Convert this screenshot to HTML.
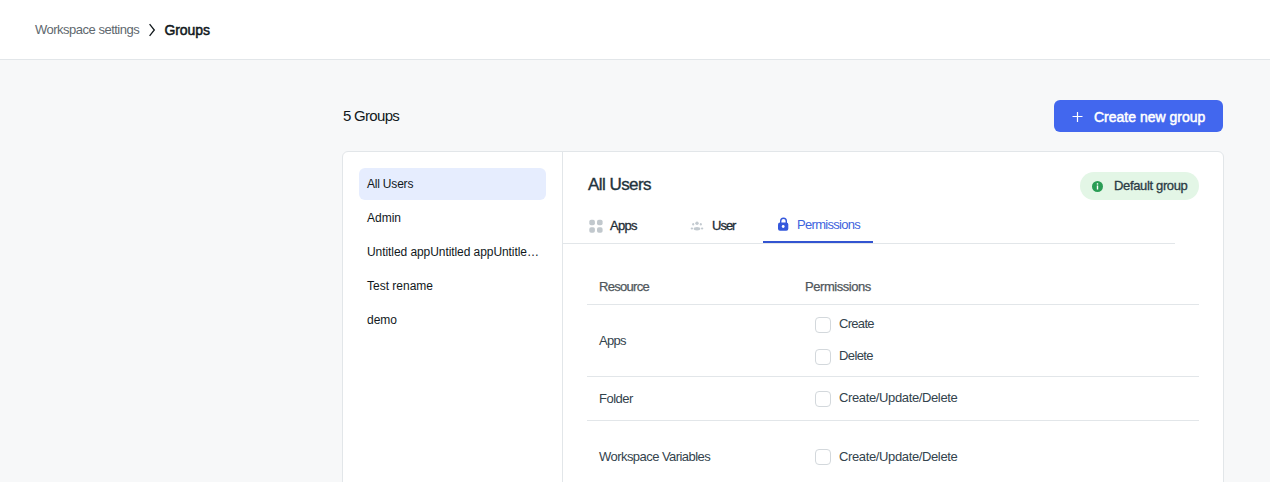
<!DOCTYPE html>
<html><head><meta charset="utf-8">
<style>
*{margin:0;padding:0;box-sizing:border-box}
html,body{width:1270px;height:482px;overflow:hidden;background:#f7f8f9;font-family:"Liberation Sans",sans-serif;color:#11181c}
.a{position:absolute;white-space:nowrap}
.t{position:absolute;white-space:nowrap;line-height:1}
#hdr{position:absolute;left:0;top:0;width:1270px;height:60px;background:#fff;border-bottom:1px solid #e2e6e9}
#btn{position:absolute;left:1054px;top:100px;width:169px;height:32px;background:#4267ee;border-radius:6px}
#card{position:absolute;left:342px;top:151px;width:882px;height:400px;background:#fff;border:1px solid #e2e6e9;border-radius:6px}
#div{position:absolute;left:562px;top:152px;width:1px;height:340px;background:#e2e6e9}
#sel{position:absolute;left:359px;top:168px;width:187px;height:32px;background:#e6edfe;border-radius:6px}
#badge{position:absolute;left:1080px;top:172px;width:119px;height:28px;background:#e3f6e6;border-radius:14px}
.ln{position:absolute;height:1px;background:#e2e6e9}
.cb{position:absolute;left:815px;width:16px;height:16px;border:1px solid #d3d8dc;border-radius:4px;background:#fff}
</style></head><body>
<div id="hdr"></div>
<div class="t" style="left:35px;top:23px;font-size:13px;color:#60686e;letter-spacing:-0.5px">Workspace settings</div>
<svg class="a" style="left:146px;top:22px" width="12" height="16" viewBox="0 0 12 16"><polyline points="3.6,2.2 8.3,8 3.6,13.8" fill="none" stroke="#11181c" stroke-width="1.3"/></svg>
<div class="t" style="left:164.5px;top:22.5px;font-size:14px;letter-spacing:-0.1px;-webkit-text-stroke:0.5px #11181c">Groups</div>

<div class="t" style="left:343px;top:108px;font-size:15px;letter-spacing:-0.7px">5 Groups</div>

<div id="btn"></div>
<svg class="a" style="left:1072px;top:111px" width="12" height="12" viewBox="0 0 12 12"><path d="M5.5 1V11M0.5 5.5H10.5" stroke="#fff" stroke-width="1.2"/></svg>
<div class="t" style="left:1094px;top:110px;font-size:14px;color:#fff;letter-spacing:0px;-webkit-text-stroke:0.5px #fff">Create new group</div>

<div id="card"></div>
<div id="div"></div>
<div id="sel"></div>
<div class="t" style="left:367px;top:178px;font-size:12px;letter-spacing:-0.2px">All Users</div>
<div class="t" style="left:367px;top:212px;font-size:12px;letter-spacing:-0.0px">Admin</div>
<div class="t" style="left:367px;top:246px;font-size:12px;letter-spacing:-0.07px">Untitled appUntitled appUntitle…</div>
<div class="t" style="left:367px;top:280px;font-size:12px;letter-spacing:-0.0px">Test rename</div>
<div class="t" style="left:367px;top:314px;font-size:12px;letter-spacing:-0.0px">demo</div>

<div class="t" style="left:588px;top:176px;font-size:17px;color:#22333d;letter-spacing:-0.55px;-webkit-text-stroke:0.35px #22333d">All Users</div>
<div id="badge"></div>
<svg class="a" style="left:1091px;top:180px" width="13" height="13" viewBox="0 0 13 13"><circle cx="6.5" cy="6.5" r="5.5" fill="#2a9d55"/><rect x="5.8" y="5.5" width="1.4" height="4" fill="#fff"/><rect x="5.8" y="3.2" width="1.4" height="1.4" fill="#fff"/></svg>
<div class="t" style="left:1114px;top:179px;font-size:13px;color:#2b3b45;letter-spacing:-0.35px;-webkit-text-stroke:0.3px #2b3b45">Default group</div>

<svg class="a" style="left:589px;top:219px" width="14" height="14" viewBox="0 0 14 14" fill="#c1c8cd"><rect x="0.3" y="0.7" width="5.6" height="5.6" rx="1.8"/><rect x="8" y="0.7" width="5.6" height="5.6" rx="1.8"/><rect x="0.3" y="8.2" width="5.6" height="5.6" rx="1.8"/><rect x="8" y="8.2" width="5.6" height="5.6" rx="1.8"/></svg>
<div class="t" style="left:610px;top:219px;font-size:13px;color:#1f2d36;letter-spacing:-0.7px;-webkit-text-stroke:0.3px #1f2d36">Apps</div>
<svg class="a" style="left:690px;top:220px" width="14" height="12" viewBox="0 0 14 12" fill="#c3cad0"><circle cx="7" cy="3.3" r="1.7"/><ellipse cx="3.2" cy="4.2" rx="1" ry="1.3"/><ellipse cx="10.8" cy="4.2" rx="1" ry="1.3"/><ellipse cx="7" cy="8.7" rx="3.3" ry="1.7"/><ellipse cx="1.9" cy="8.4" rx="1.2" ry="1"/><ellipse cx="12.1" cy="8.4" rx="1.2" ry="1"/></svg>
<div class="t" style="left:712px;top:219px;font-size:13px;color:#1f2d36;letter-spacing:-1px;-webkit-text-stroke:0.3px #1f2d36">User</div>
<svg class="a" style="left:777px;top:217px" width="13" height="15" viewBox="0 0 13 15"><path d="M3.7 6.2V4.1a2.5 2.5 0 0 1 5.6 0V6.2" fill="none" stroke="#3558dc" stroke-width="1.4"/><rect x="1" y="5.4" width="10.3" height="8.4" rx="2" fill="#3558dc"/><circle cx="6.2" cy="9.5" r="1.4" fill="#fff"/></svg>
<div class="t" style="left:797px;top:218px;font-size:13px;color:#3e63dd;letter-spacing:-0.7px">Permissions</div>
<div class="ln" style="left:563px;top:243px;width:612px"></div>
<div class="a" style="left:763px;top:241px;width:110px;height:2px;background:#3354d1"></div>

<div class="t" style="left:599px;top:280px;font-size:13px;color:#50575c;letter-spacing:-0.7px;-webkit-text-stroke:0.25px #50575c">Resource</div>
<div class="t" style="left:805px;top:280px;font-size:13px;color:#50575c;letter-spacing:-0.45px;-webkit-text-stroke:0.25px #50575c">Permissions</div>
<div class="ln" style="left:587px;top:304px;width:612px"></div>

<div class="t" style="left:599px;top:334px;font-size:13px;color:#33434d;letter-spacing:-0.7px">Apps</div>
<div class="cb" style="top:317px"></div>
<div class="t" style="left:839px;top:316.8px;font-size:13px;color:#33434d;letter-spacing:-0.7px">Create</div>
<div class="cb" style="top:349px"></div>
<div class="t" style="left:839px;top:349px;font-size:13px;color:#33434d;letter-spacing:-0.6px">Delete</div>
<div class="ln" style="left:587px;top:376px;width:612px"></div>

<div class="t" style="left:599px;top:392px;font-size:13px;color:#33434d;letter-spacing:-0.5px">Folder</div>
<div class="cb" style="top:391px"></div>
<div class="t" style="left:839px;top:391px;font-size:13px;color:#33434d;letter-spacing:-0.37px">Create/Update/Delete</div>
<div class="ln" style="left:587px;top:420px;width:612px"></div>

<div class="t" style="left:599px;top:449.5px;font-size:13px;color:#33434d;letter-spacing:-0.55px">Workspace Variables</div>
<div class="cb" style="top:449px"></div>
<div class="t" style="left:839px;top:449.5px;font-size:13px;color:#33434d;letter-spacing:-0.37px">Create/Update/Delete</div>
</body></html>
